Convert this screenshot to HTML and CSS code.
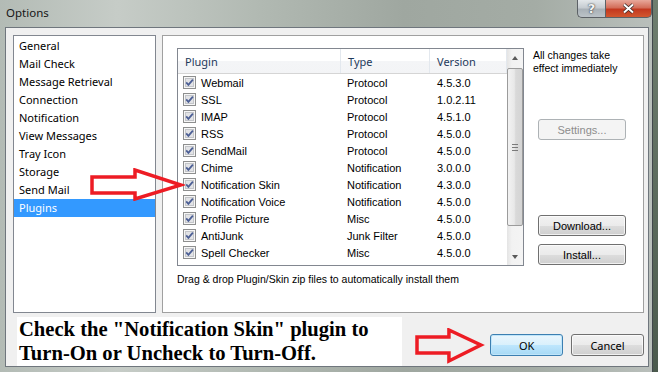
FILE: index.html
```html
<!DOCTYPE html>
<html>
<head>
    <title>Options</title>
    <meta charset="UTF-8">
    <link rel="stylesheet" href="styles.css">
</head>
<body>
    <svg width="0" height="0" class="defs">
        <symbol id="chk" viewBox="0 0 13 13">
            <rect x="0.5" y="0.5" width="12" height="12" fill="#f6f6f6" stroke="#8e8f8f"/>
            <rect x="2.5" y="2.5" width="8" height="8" fill="#e2e3e6" stroke="#c3c5c9"/>
            <path d="M3.2 6.4 L5.4 8.8 L9.9 3.6" fill="none" stroke="#4c5f95" stroke-width="1.8"/>
        </symbol>
    </svg>

    <div class="window">
        <div class="titlebar">
            <span class="title">Options</span>
            <div class="caption-buttons">
                <div class="cap help">?</div>
                <div class="cap close">
                    <svg width="13" height="11" viewBox="0 0 13 11">
                        <path d="M2 1.5 L11 9.5 M11 1.5 L2 9.5" stroke="#3a2a28" stroke-width="3.6"/>
                        <path d="M2 1.5 L11 9.5 M11 1.5 L2 9.5" stroke="#ffffff" stroke-width="2"/>
                    </svg>
                </div>
            </div>
        </div>

        <div class="client">
            <div class="panels">
                <ul class="nav">
                    <li>General</li>
                    <li>Mail Check</li>
                    <li>Message Retrieval</li>
                    <li>Connection</li>
                    <li>Notification</li>
                    <li>View Messages</li>
                    <li>Tray Icon</li>
                    <li>Storage</li>
                    <li>Send Mail</li>
                    <li class="selected">Plugins</li>
                </ul>

                <div class="page">
                    <div class="page-top">
                        <div class="listview">
                            <div class="lv-table">
                                <div class="lv-row lv-head">
                                    <div class="cell">Plugin</div>
                                    <div class="cell">Type</div>
                                    <div class="cell">Version</div>
                                </div>
                                <div class="lv-row"><div class="cell name"><svg class="cb"><use href="#chk"/></svg>Webmail</div><div class="cell">Protocol</div><div class="cell">4.5.3.0</div></div>
                                <div class="lv-row"><div class="cell name"><svg class="cb"><use href="#chk"/></svg>SSL</div><div class="cell">Protocol</div><div class="cell">1.0.2.11</div></div>
                                <div class="lv-row"><div class="cell name"><svg class="cb"><use href="#chk"/></svg>IMAP</div><div class="cell">Protocol</div><div class="cell">4.5.1.0</div></div>
                                <div class="lv-row"><div class="cell name"><svg class="cb"><use href="#chk"/></svg>RSS</div><div class="cell">Protocol</div><div class="cell">4.5.0.0</div></div>
                                <div class="lv-row"><div class="cell name"><svg class="cb"><use href="#chk"/></svg>SendMail</div><div class="cell">Protocol</div><div class="cell">4.5.0.0</div></div>
                                <div class="lv-row"><div class="cell name"><svg class="cb"><use href="#chk"/></svg>Chime</div><div class="cell">Notification</div><div class="cell">3.0.0.0</div></div>
                                <div class="lv-row"><div class="cell name"><svg class="cb"><use href="#chk"/></svg>Notification Skin</div><div class="cell">Notification</div><div class="cell">4.3.0.0</div></div>
                                <div class="lv-row"><div class="cell name"><svg class="cb"><use href="#chk"/></svg>Notification Voice</div><div class="cell">Notification</div><div class="cell">4.5.0.0</div></div>
                                <div class="lv-row"><div class="cell name"><svg class="cb"><use href="#chk"/></svg>Profile Picture</div><div class="cell">Misc</div><div class="cell">4.5.0.0</div></div>
                                <div class="lv-row"><div class="cell name"><svg class="cb"><use href="#chk"/></svg>AntiJunk</div><div class="cell">Junk Filter</div><div class="cell">4.5.0.0</div></div>
                                <div class="lv-row"><div class="cell name"><svg class="cb"><use href="#chk"/></svg>Spell Checker</div><div class="cell">Misc</div><div class="cell">4.5.0.0</div></div>
                            </div>
                            <div class="scrollbar">
                                <div class="sb-arrow"><span class="tri up"></span></div>
                                <div class="sb-track">
                                    <div class="sb-thumb"><span class="grip"></span></div>
                                </div>
                                <div class="sb-arrow"><span class="tri down"></span></div>
                            </div>
                        </div>

                        <div class="side">
                            <p class="side-note">All changes take<br>effect immediately</p>
                            <button class="btn small disabled settings">Settings...</button>
                            <button class="btn small download">Download...</button>
                            <button class="btn small install">Install...</button>
                        </div>
                    </div>
                    <p class="hint">Drag &amp; drop Plugin/Skin zip files to automatically install them</p>
                </div>
            </div>

            <div class="footer">
                <div class="note">Check the "Notification Skin" plugin to<br>Turn-On or Uncheck to Turn-Off.</div>
                <svg class="arrow-right" width="70" height="36" viewBox="0 0 70 36">
                    <path d="M2 9 H34 V2 L66 17 L34 33 V25 H2 Z" fill="none" stroke="#ed1c24" stroke-width="3.5"/>
                </svg>
                <button class="btn default">OK</button>
                <button class="btn">Cancel</button>
            </div>

            <!-- annotation arrow pointing at the Notification Skin row -->
            <svg class="arrow-left" width="95" height="33" viewBox="0 0 95 33">
                <path d="M2 9 H45 V2 L91 17 L45 31 V25 H2 Z" fill="none" stroke="#ed1c24" stroke-width="3.5"/>
            </svg>
        </div>
    </div>
</body>
</html>
```

FILE: styles.css
```css
body {
    margin: 0;
    width: 658px;
    height: 372px;
    overflow: hidden;
    background: linear-gradient(to bottom, #6f7e6f, #4b5a4d);
    font-family: "Liberation Sans", Arial, sans-serif;
}

.defs {
    position: absolute;
}

.window {
    width: 653px;
    height: 372px;
    box-sizing: border-box;
    padding: 0 3px 5px 5px;
    border-right: 1px solid #41474c;
    display: flex;
    flex-direction: column;
    background: linear-gradient(to right, #b3bbb5 0%, #c6ccc7 18%, #b1b9b2 40%, #9fa7a0 62%, #a4aca5 82%, #b9bfbb 100%);
}

.titlebar {
    height: 27px;
    display: flex;
    align-items: flex-start;
    margin-left: -5px;
    margin-right: -3px;
}

.title {
    font-family: "Noto Sans", "Open Sans", sans-serif;
    font-size: 11.5px;
    color: #151515;
    padding: 5px 0 0 6px;
    flex: 1;
}

.caption-buttons {
    display: flex;
    height: 19px;
}

.cap {
    height: 18px;
    box-sizing: border-box;
    display: flex;
    align-items: center;
    justify-content: center;
    border: 1px solid #5c6166;
    border-top: none;
}

.help {
    width: 28px;
    border-radius: 0 0 0 5px;
    border-right: none;
    background: linear-gradient(to bottom, #e3e7ea 0%, #c6ccd1 45%, #a9b1b7 55%, #bcc3c8 100%);
    font-family: "DejaVu Sans", sans-serif;
    font-size: 13px;
    font-weight: bold;
    color: #f4f4f4;
    text-shadow: 0 0 2px #3a3f44, 0 0 1px #3a3f44;
}

.close {
    width: 47px;
    border-radius: 0 0 5px 0;
    background: linear-gradient(to bottom, #e8a89b 0%, #d36e5a 45%, #c3381f 55%, #d2572f 100%);
}

.client {
    flex: 1;
    position: relative;
    background: #f0f0f0;
    border: 1px solid #6f767d;
    padding: 7px 4px 0 7px;
    display: flex;
    flex-direction: column;
}

.panels {
    display: flex;
    gap: 6px;
    height: 278px;
}

.nav {
    list-style: none;
    margin: 0;
    padding: 1px 0 0;
    width: 143px;
    box-sizing: border-box;
    background: #fff;
    border: 1px solid #828790;
    font-family: "Noto Sans", "Open Sans", sans-serif;
    font-size: 11px;
    color: #000;
}

.nav li {
    height: 18px;
    line-height: 18px;
    padding-left: 5px;
}

.nav li.selected {
    background: #3399ff;
    color: #fff;
}

.page {
    flex: 1;
    background: #fff;
    border: 1px solid #a0a0a0;
    padding: 12px 0 0 14px;
}

.page-top {
    display: flex;
}

.listview {
    width: 347px;
    height: 218px;
    box-sizing: border-box;
    border: 1px solid #828790;
    display: flex;
    overflow: hidden;
}

.lv-table {
    flex: 1;
}

.lv-row {
    display: grid;
    grid-template-columns: 163px 89px 1fr;
    height: 17px;
    align-items: center;
    font-size: 11px;
    color: #000;
}

.lv-head {
    height: 24px;
    border-bottom: 1px solid #d5d5d5;
    background: linear-gradient(to bottom, #ffffff 0%, #ffffff 50%, #f4f5f7 51%, #f3f4f6 100%);
    font-family: "Noto Sans", "Open Sans", sans-serif;
    font-size: 11px;
    color: #1e395b;
    align-items: stretch;
}

.lv-head .cell {
    display: flex;
    align-items: center;
    padding-left: 7px;
    border-right: 1px solid #e3e8ee;
}

.cell {
    padding-left: 6px;
    white-space: nowrap;
}

.cell:nth-child(3) {
    padding-left: 7px;
}

.cell.name {
    display: flex;
    align-items: center;
    gap: 5px;
    padding-left: 5px;
}

.cb {
    width: 13px;
    height: 13px;
    flex: none;
}

.scrollbar {
    width: 16px;
    display: flex;
    flex-direction: column;
    background: linear-gradient(to right, #e4e4e4, #f2f2f2 30%, #f4f4f4);
}

.sb-arrow {
    height: 17px;
    display: flex;
    align-items: center;
    justify-content: center;
}

.tri {
    width: 0;
    height: 0;
    border-left: 3.5px solid transparent;
    border-right: 3.5px solid transparent;
}

.tri.up {
    border-bottom: 4px solid #5a5a5a;
}

.tri.down {
    border-top: 4px solid #5a5a5a;
}

.sb-track {
    flex: 1;
    padding: 2px 0 0;
}

.sb-thumb {
    height: 158px;
    box-sizing: border-box;
    border: 1px solid #9b9b9b;
    border-radius: 2px;
    background: linear-gradient(to right, #f2f2f2 0%, #e8e8e8 45%, #d9d9d9 55%, #d4d4d4 100%);
    display: flex;
    align-items: center;
    justify-content: center;
}

.grip {
    width: 6px;
    height: 5px;
    border-top: 1px solid #7a7a7a;
    border-bottom: 1px solid #7a7a7a;
    background: linear-gradient(to bottom, transparent 2px, #7a7a7a 2px, #7a7a7a 3px, transparent 3px);
}

.side {
    display: flex;
    flex-direction: column;
    align-items: flex-start;
    margin-left: 9px;
}

.side-note {
    margin: 1px 0 0;
    font-size: 10.5px;
    line-height: 13px;
    color: #000;
}

.btn {
    font-family: "Noto Sans", "Open Sans", sans-serif;
    font-size: 11px;
    color: #000;
    width: 73px;
    height: 22px;
    padding: 0;
    border: 1px solid #707070;
    border-radius: 3px;
    background: linear-gradient(to bottom, #f2f2f2 0%, #ebebeb 50%, #dddddd 51%, #cfcfcf 100%);
    box-shadow: inset 0 0 0 1px rgba(255, 255, 255, 0.7);
}

.btn.small {
    font-family: "Liberation Sans", Arial, sans-serif;
    width: 88px;
    height: 21px;
    margin-left: 5px;
}

.btn.disabled {
    color: #8d8d8d;
    border-color: #adb2b5;
    background: #f4f4f4;
    box-shadow: none;
}

.settings {
    margin-top: 44px;
}

.download {
    margin-top: 75px;
}

.install {
    margin-top: 8px;
}

.btn.default {
    border-color: #3c7fb1;
    background: linear-gradient(to bottom, #eaf6fd 0%, #d9f0fc 50%, #bee6fd 51%, #a7d9f5 100%);
    box-shadow: inset 0 0 0 1px #bfe5fa;
}

.hint {
    margin: 7px 0 0;
    font-size: 10.5px;
    line-height: 13px;
    color: #000;
}

.footer {
    flex: 1;
    display: flex;
    align-items: flex-start;
}

.note {
    margin: 4px 0 0 4px;
    width: 386px;
    height: 49px;
    box-sizing: border-box;
    padding: 0 0 0 2px;
    background: #fff;
    font-family: "Liberation Serif", "Times New Roman", serif;
    font-weight: bold;
    font-size: 20.6px;
    line-height: 24px;
    color: #000;
    align-self: flex-end;
}

.arrow-right {
    margin: 15px 0 0 13px;
}

.footer .btn {
    margin-top: 21px;
    margin-left: 8px;
}

.footer .btn.default {
    margin-left: 5px;
}

.arrow-left {
    position: absolute;
    left: 84px;
    top: 140px;
}
```
